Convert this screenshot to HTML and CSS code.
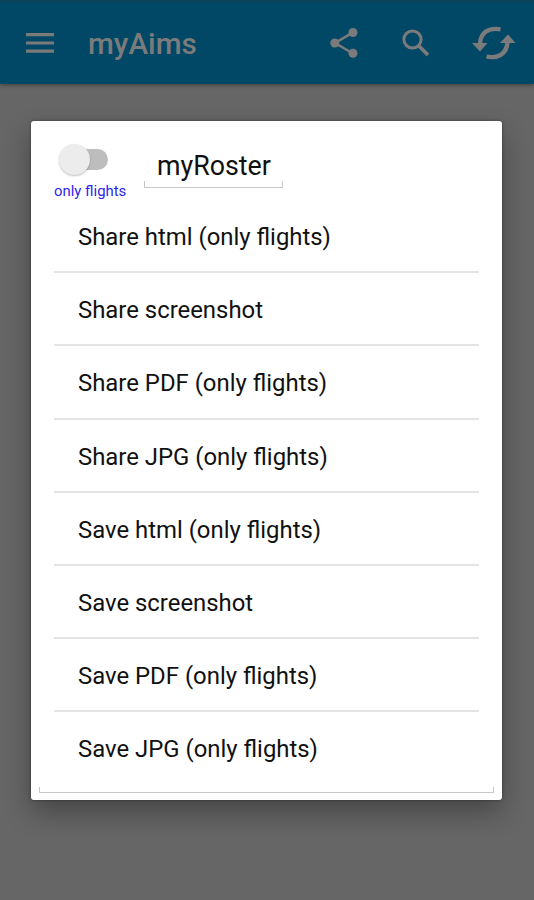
FILE: index.html
```html
<!DOCTYPE html>
<html lang="en">
<head>
<meta charset="utf-8">
<title>myAims</title>
<link rel="stylesheet" href="styles.css">
</head>
<body>
<header class="bar">
  <svg class="menu" viewBox="0 0 28 20" width="28" height="20"><path d="M0 1.7h28M0 10h28M0 18.2h28"/></svg>
  <h1 class="title">myAims</h1>
  <svg class="share" viewBox="0 0 28 32" width="28" height="32"><path d="M23 5.3 5 16l18 10.5"/><circle cx="23" cy="5.5" r="4.5"/><circle cx="4.8" cy="16" r="4.5"/><circle cx="23" cy="26.3" r="4.5"/></svg>
  <svg class="search" viewBox="0 0 28 28" width="28" height="28"><circle cx="10.5" cy="10.5" r="8.6"/><path class="handle" d="m16.5 16.5 9.5 9.5"/></svg>
  <svg class="sync" viewBox="0 0 44 34" width="44" height="34"><path class="arc" d="M28.5 3.3C17 1.3 8.5 6 8 18M14.5 30.7C26 32.7 34.8 28 35.5 16"/><path d="M0 17h15.5L8 25.500zM28 17h15.5L36 8.500z"/></svg>
</header>
<main class="dialog">
  <div class="head">
    <div class="toggle">
      <div class="track"><div class="thumb"></div></div>
      <div class="caption">only flights</div>
    </div>
    <div class="field">myRoster</div>
  </div>
  <ul class="list">
    <li>Share html (only flights)</li>
    <li>Share screenshot</li>
    <li>Share PDF (only flights)</li>
    <li>Share JPG (only flights)</li>
    <li>Save html (only flights)</li>
    <li>Save screenshot</li>
    <li>Save PDF (only flights)</li>
    <li>Save JPG (only flights)</li>
  </ul>
  <div class="underline"></div>
</main>
</body>
</html>
```
FILE: styles.css
```css
* { box-sizing: border-box; }
body {
  margin: 0;
  height: 900px;
  overflow: hidden;
  background: #666;
  font-family: Roboto, sans-serif;
}
.bar {
  display: flex;
  align-items: center;
  height: 84px;
  padding: 0 18px 0 25.5px;
  background: #004866;
  border-top: 2px solid #0b435b;
  box-shadow: 0 1px 4px rgba(0, 0, 0, .4);
}
.bar svg { flex: none; fill: #7b7b7b; stroke: none; }
.bar .menu { stroke: #7b7b7b; stroke-width: 3.2; }
.title {
  margin: 2px 0 0;
  width: 243px;
  padding-left: 34.5px;
  font-size: 29.7px;
  line-height: 34px;
  font-weight: 500;
  color: #7b7b7b;
}
.bar .share { margin-left: 34.5px; stroke: #7b7b7b; }
.share path { fill: none; stroke-width: 2.6; }
.bar .share circle { stroke: none; }
.bar .search { margin-left: 44px; fill: none; stroke: #7b7b7b; stroke-width: 3; }
.search .handle { stroke-width: 3.8; }
.bar .sync { margin-left: 42px; }
.sync .arc { fill: none; stroke: #7b7b7b; stroke-width: 4.4; }
.dialog {
  width: 471px;
  height: 679px;
  margin: 37px 0 0 31px;
  padding: 22px 8px 7px;
  background: #fff;
  border-radius: 3px;
  box-shadow: 0 12px 28px rgba(0, 0, 0, .32), 0 0 3px rgba(0, 0, 0, .4);
}
.head { display: flex; height: 57px; padding-left: 15px; }
.toggle { width: 90px; }
.track {
  width: 46px;
  height: 21px;
  margin: 6px 0 0 8px;
  border-radius: 11px;
  background: #bdbdbd;
  display: flex;
  align-items: center;
}
.thumb {
  flex: none;
  width: 31px;
  height: 31px;
  margin-left: -3px;
  border-radius: 50%;
  background: #ececec;
  box-shadow: 0 1px 2px rgba(0, 0, 0, .25);
}
.caption {
  margin-top: 13px;
  font-size: 14.9px;
  line-height: 17px;
  color: #2c1ff0;
  white-space: nowrap;
}
.field {
  position: relative;
  width: 139px;
  height: 45px;
  padding-left: 13px;
  font-size: 26.8px;
  line-height: 46px;
  color: #111;
}
.field::after, .underline {
  border: 1px solid #c8c8c8;
  border-top: 0;
  height: 6px;
}
.field::after {
  content: "";
  position: absolute;
  left: 0;
  right: 0;
  bottom: 0;
}
.list {
  margin: 0 15px;
  padding: 0;
  list-style: none;
}
.list li {
  height: 73.2px;
  padding-left: 24px;
  font-size: 23.9px;
  line-height: 74px;
  color: #111;
  border-bottom: 2px solid #e4e4e4;
}
.list li:last-child { border: 0; }
.underline { margin-top: 1px; }
```
